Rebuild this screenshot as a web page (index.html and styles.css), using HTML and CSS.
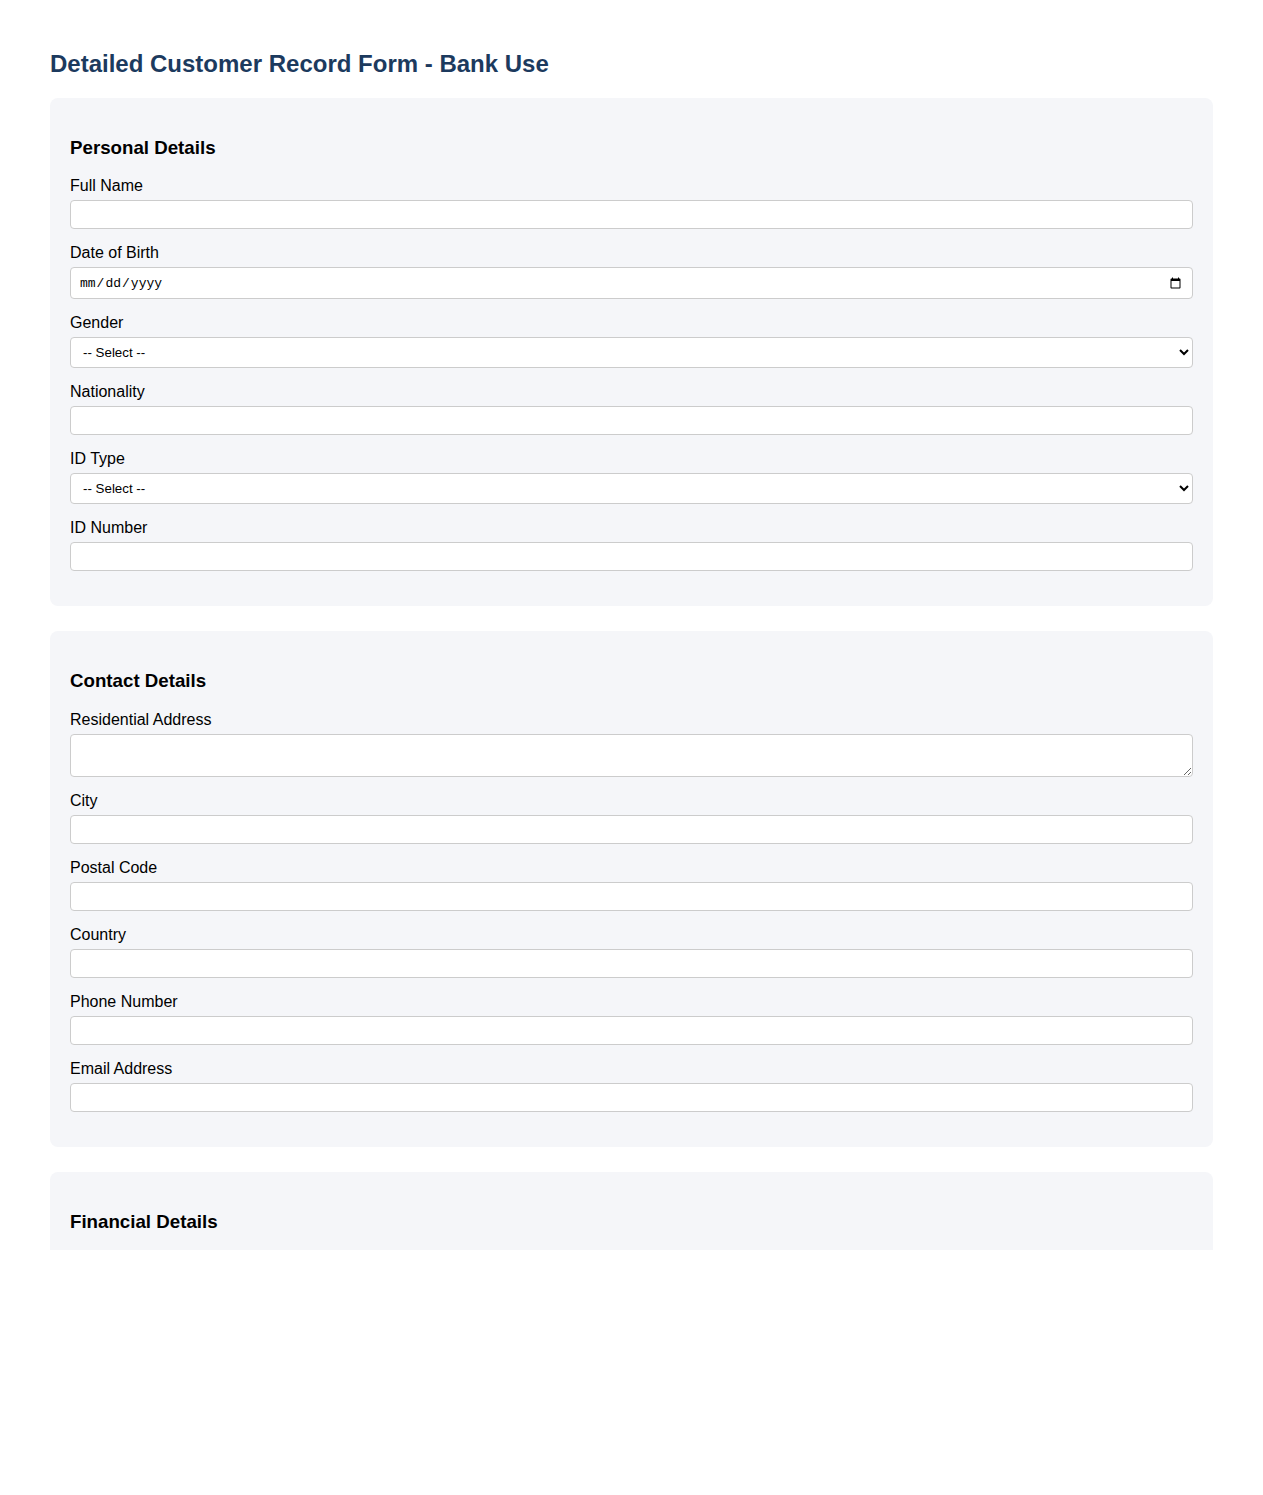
FILE: index.html
```html
<!DOCTYPE html>
<html lang="en">
<head>
<meta charset="utf-8">
<title>Detailed Customer Record Form - Bank Use</title>
<link rel="stylesheet" href="styles.css">
</head>
<body>
<div class="page">
  <h2 class="page-title">Detailed Customer Record Form - Bank Use</h2>
  <form class="record-form">
    <section class="form-section">
      <h3 class="section-title">Personal Details</h3>
      <label class="field-label" for="fullName">Full Name</label>
      <input class="field" type="text" id="fullName">
      <label class="field-label" for="dob">Date of Birth</label>
      <input class="field field-date" type="date" id="dob">
      <label class="field-label" for="gender">Gender</label>
      <select class="field field-select" id="gender">
        <option>-- Select --</option>
        <option>Male</option>
        <option>Female</option>
        <option>Other</option>
      </select>
      <label class="field-label" for="nationality">Nationality</label>
      <input class="field" type="text" id="nationality">
      <label class="field-label" for="idType">ID Type</label>
      <select class="field field-select" id="idType">
        <option>-- Select --</option>
        <option>Passport</option>
        <option>National ID</option>
        <option>Driver's License</option>
      </select>
      <label class="field-label" for="idNumber">ID Number</label>
      <input class="field" type="text" id="idNumber">
    </section>

    <section class="form-section">
      <h3 class="section-title">Contact Details</h3>
      <label class="field-label" for="address">Residential Address</label>
      <textarea class="field field-area" id="address" rows="2"></textarea>
      <label class="field-label" for="city">City</label>
      <input class="field" type="text" id="city">
      <label class="field-label" for="postal">Postal Code</label>
      <input class="field" type="text" id="postal">
      <label class="field-label" for="country">Country</label>
      <input class="field" type="text" id="country">
      <label class="field-label" for="phone">Phone Number</label>
      <input class="field" type="tel" id="phone">
      <label class="field-label" for="email">Email Address</label>
      <input class="field" type="email" id="email">
    </section>

    <section class="form-section">
      <h3 class="section-title">Financial Details</h3>
    </section>
  </form>
</div>
</body>
</html>
```

FILE: styles.css
```css
html, body {
  margin: 0;
  padding: 0;
  background: #ffffff;
}

body {
  font-family: "Liberation Sans", Arial, sans-serif;
  color: #000000;
}

.page {
  box-sizing: border-box;
  height: 1250px;
  overflow: hidden;
  padding: 30px 50px 0;
}

.page-title {
  font-size: 24px;
  font-weight: bold;
  color: #1c3a5e;
  margin: 20px 0 20px;
}

.record-form {
  margin: 0;
}

.form-section {
  background: #f5f6f9;
  border-radius: 8px;
  padding: 20px;
  margin-bottom: 25px;
}

.section-title {
  font-size: 18.72px;
  font-weight: bold;
  margin: 18.72px 0;
}

.field-label {
  display: block;
  font-size: 16px;
  line-height: 18px;
  margin-bottom: 5px;
}

.field {
  display: block;
  box-sizing: border-box;
  width: 100%;
  margin: 0 0 15px;
  padding: 6px 8px;
  border: 1px solid #cccccc;
  border-radius: 4px;
  background: #ffffff;
  font-family: "Liberation Sans", Arial, sans-serif;
  font-size: 13.33px;
  color: #000000;
}

.field-date {
  font-family: "Liberation Mono", monospace;
  font-size: 13px;
  height: 32px;
}

.field-select {
  height: 31px;
  padding: 4px 8px;
}

.field-area {
  font-family: "Liberation Mono", monospace;
  font-size: 13.33px;
  height: 43px;
  resize: vertical;
}
```
